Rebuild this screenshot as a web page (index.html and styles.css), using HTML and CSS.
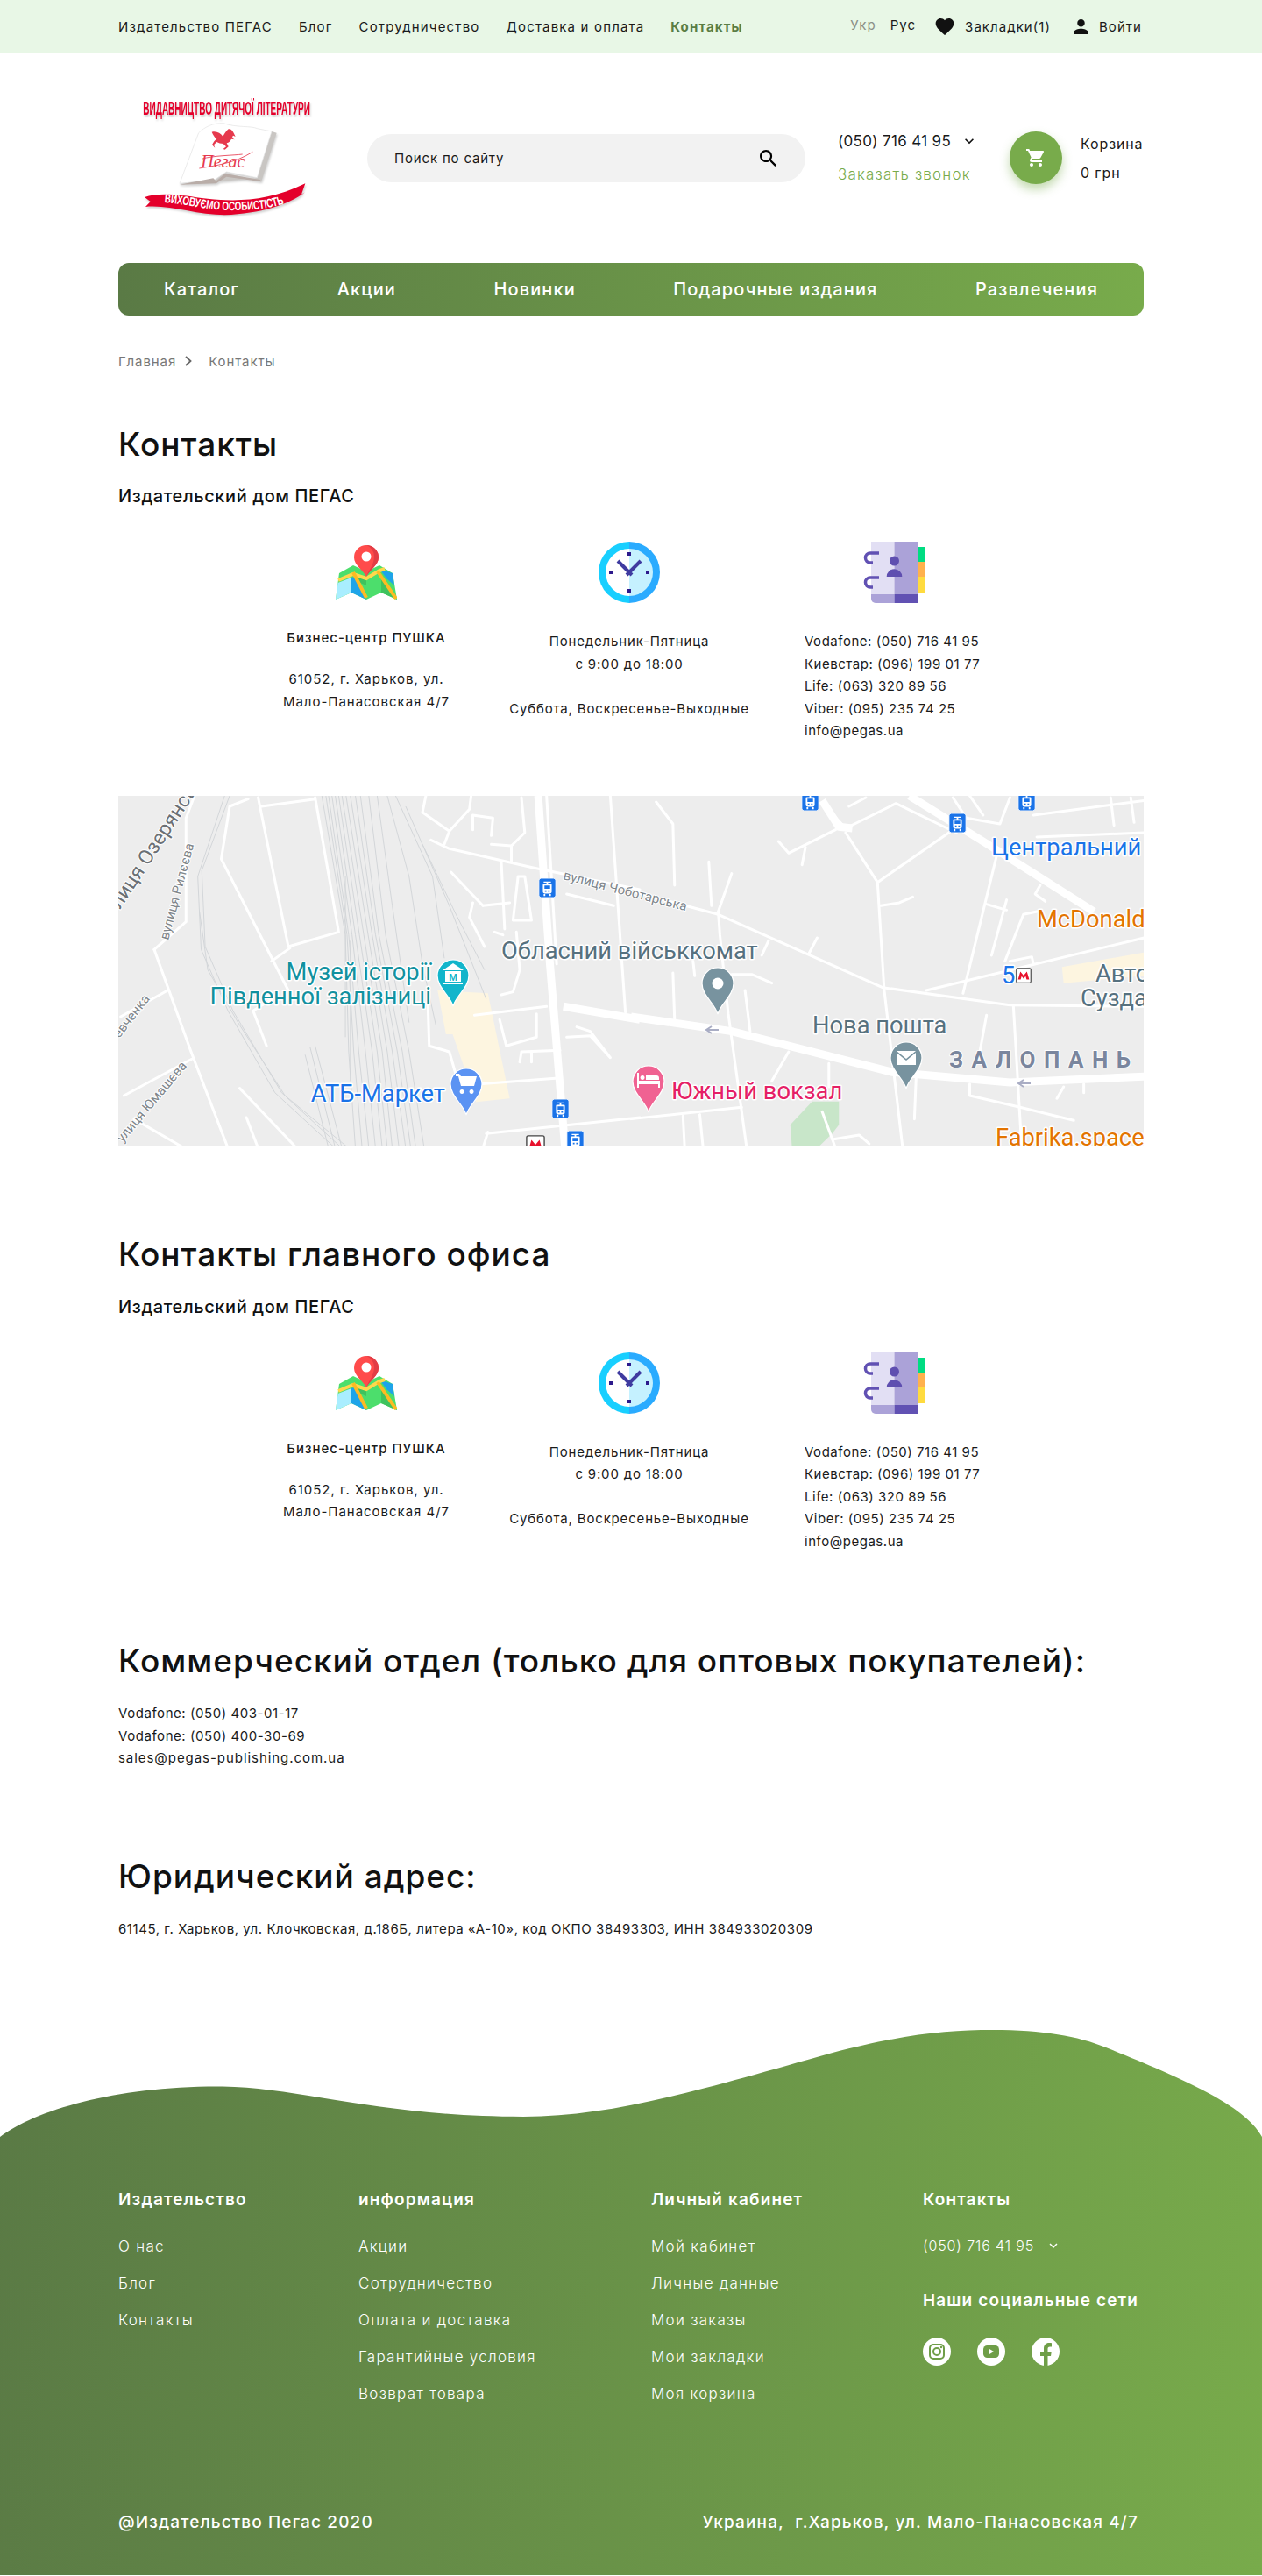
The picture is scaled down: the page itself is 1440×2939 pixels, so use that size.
FILE: index.html
```html
<!DOCTYPE html>
<html lang="ru">
<head>
<meta charset="utf-8">
<title>Контакты — Издательство ПЕГАС</title>
<link rel="stylesheet" href="styles.css">
</head>
<body>
<svg class="defs" width="0" height="0" aria-hidden="true">
  <defs>
    <symbol id="i-map" viewBox="0 0 70 70">
      <path fill="#4cde6c" d="M4 36 20 27 35 34 50 27 65 36 70 66 52 58 35 66 18 58 0 66Z"/>
      <path fill="#a9eeff" d="M2.500 47 18 41 18 58 0 66Z"/>
      <path fill="#1ea4e9" d="M18 41 22 40 35 66 18 58Z"/>
      <path fill="#1ea4e9" d="M50 31 65 36 67 50 58 42Z"/>
      <path fill="#3fc25e" d="M52 40 70 66 52 58Z"/>
      <path fill="#3fc25e" d="M22 38 35 42 35 50 28 47Z"/>
      <path fill="none" stroke="#ffd84d" stroke-width="4" d="M3 44 20 37 35 42 50 33 56 31"/>
      <path fill="none" stroke="#fdbb23" stroke-width="4" d="M20 35 35 64M48 34 69 65"/>
      <path fill="#ff4b4b" d="M35 40C32 33 21 27 21 18A14 14 0 0 1 49 18C49 27 38 33 35 40Z"/>
      <path fill="#e23c45" d="M35 4A14 14 0 0 1 49 18C49 27 38 33 35 40C38 32 44 26 44 17A14 14 0 0 0 35 4Z"/>
      <circle cx="35" cy="17" r="5.500" fill="#fff"/>
    </symbol>
    <symbol id="i-clock" viewBox="0 0 70 70">
      <path fill="#18cfff" d="M35 0A35 35 0 0 0 35 70Z"/>
      <path fill="#2aabff" d="M35 0A35 35 0 0 1 35 70Z"/>
      <path fill="#fff" d="M35 8A27 27 0 0 0 35 62Z"/>
      <path fill="#c5f1ff" d="M35 8A27 27 0 0 1 35 62Z"/>
      <path fill="#2d1a8c" d="M33 12h4v4h-4zM33 54h4v4h-4zM12 33h4v4h-4zM54 33h4v4h-4z"/>
      <path fill="none" stroke="#3f3ba0" stroke-width="4" d="M22 22 38 38M48 22 32 38"/>
    </symbol>
    <symbol id="i-book" viewBox="0 0 70 70">
      <path fill="#00dc82" d="M62 6h8v17h-8z"/>
      <path fill="#ffb14d" d="M62 23h8v17h-8z"/>
      <path fill="#ffdb3f" d="M62 40h8v18h-8z"/>
      <path fill="#e2dff4" d="M9 0h26.500v60H9z"/>
      <path fill="#aba2d8" d="M35.500 0H62v60H35.500z"/>
      <path fill="#aba2d8" d="M9 60h26.500v10H14a5 5 0 0 1-5-5z"/>
      <path fill="#6151b3" d="M35.500 60H62v10H35.500z"/>
      <path fill="none" stroke="#6151b3" stroke-width="3.500" d="M18 13H8a5 5 0 0 0 0 11h3M18 41H8a5 5 0 0 0 0 11h3"/>
      <circle cx="35.500" cy="22" r="5.500" fill="#5f4fb0"/>
      <path fill="#5f4fb0" d="M26.700 40a8.800 8.800 0 0 1 17.600 0z"/>
    </symbol>
    <symbol id="i-cart" viewBox="0 0 24 24"><path d="M7 18c-1.100 0-1.990.9-1.990 2S5.900 22 7 22s2-.9 2-2-.9-2-2-2zM1 2v2h2l3.600 7.590-1.350 2.450c-.16.28-.25.61-.25.96 0 1.100.9 2 2 2h12v-2H7.420c-.14 0-.25-.11-.25-.25l.03-.12.9-1.630h7.450c.75 0 1.410-.41 1.750-1.030l3.580-6.490c.08-.14.12-.31.12-.48 0-.55-.45-1-1-1H5.210l-.94-2H1zm16 16c-1.100 0-1.990.9-1.990 2s.89 2 1.990 2 2-.9 2-2-.9-2-2-2z"/></symbol>
    <symbol id="i-chev" viewBox="0 0 24 24"><path d="M7.410 8.590 12 13.170l4.590-4.580L18 10l-6 6-6-6z"/></symbol>
    <symbol id="i-tram" viewBox="0 0 21 24">
      <rect width="21" height="24" rx="3" fill="#1a73e8" stroke="#fff" stroke-width="1"/>
      <path fill="#fff" d="M6 4h9v1.500h-3.500V7H15a1 1 0 0 1 1 1v9a2 2 0 0 1-2 2H7a2 2 0 0 1-2-2V8a1 1 0 0 1 1-1h3.500V5.500H6z"/>
      <path fill="#1a73e8" d="M7 9h7v4H7zM7.500 15h2v2h-2zM11.500 15h2v2h-2z"/>
      <path fill="#fff" d="M6 19.500h2V22H6zM13 19.500h2V22h-2z"/>
    </symbol>
    <symbol id="i-metro" viewBox="0 0 24 24">
      <rect x="1" y="1" width="22" height="22" rx="2" fill="#fff" stroke="#444" stroke-width="1.500"/>
      <path fill="#e8112d" d="M3.500 18 7 6l5 6 5-6 3.500 12h-4l-1.500-5-3 4-3-4-1.500 5z"/>
    </symbol>
  </defs>
</svg>

<header class="topbar">
  <div class="wrap topbar-row">
    <nav class="top-links">
      <a>Издательство ПЕГАС</a><a>Блог</a><a>Сотрудничество</a><a>Доставка и оплата</a><a class="is-active">Контакты</a>
    </nav>
    <div class="top-tools">
      <span class="lang lang-off">Укр</span>
      <span class="lang">Рус</span>
      <span class="tool tool-heart">
        <svg class="ico-heart" viewBox="2 3 20 18.350"><path d="M12 21.350l-1.450-1.320C5.400 15.360 2 12.280 2 8.500 2 5.420 4.420 3 7.500 3c1.740 0 3.410.81 4.500 2.090C13.090 3.810 14.760 3 16.500 3 19.580 3 22 5.420 22 8.500c0 3.780-3.400 6.860-8.550 11.540L12 21.350z"/></svg>
        Закладки(1)
      </span>
      <span class="tool">
        <svg class="ico-user" viewBox="4 4 16 16"><path d="M12 12c2.210 0 4-1.790 4-4s-1.790-4-4-4-4 1.790-4 4 1.790 4 4 4zm0 2c-2.670 0-8 1.340-8 4v2h16v-2c0-2.660-5.330-4-8-4z"/></svg>
        Войти
      </span>
    </div>
  </div>
</header>

<div class="wrap head-row">
  <svg class="logo" viewBox="15 0 690 540" role="img" aria-label="Издательство Пегас">
    <g class="logo-shadow">
      <text class="logo-top" transform="scale(.4 1)" x="250" y="124" textLength="1430" lengthAdjust="spacingAndGlyphs">ВИДАВНИЦТВО  ДИТЯЧОЇ  ЛІТЕРАТУРИ</text>
    </g>
    <g class="logo-shadow">
      <path fill="#c9c6c3" d="M225 362 350 345 378 322 505 350 557 185 540 180 490 340Z"/>
      <path fill="#fff" stroke="#e3e3e3" stroke-width="2" d="M225 358 290 185C310 165 340 150 375 152 420 168 470 160 490 170L540 180 490 338 385 318 345 345Z"/>
      <path fill="#b9ada8" d="M225 362 340 340 350 350 380 325 500 345 505 352 385 335 350 358Z"/>
    </g>
    <path fill="#e6394d" d="M335 182C350 178 365 185 373 197 378 190 384 178 392 172 402 170 408 180 416 198L408 194C404 200 404 204 414 208L402 206C398 214 394 218 386 220L392 232 380 242 374 240 384 232 374 222C366 222 358 220 352 216L342 226 346 236 336 226C340 218 344 210 352 206 344 200 340 192 335 182Z"/>
    <text class="logo-script" x="298" y="304" textLength="150" lengthAdjust="spacingAndGlyphs">Пегас</text>
    <path fill="none" stroke="#e6394d" stroke-width="2.500" d="M292 306C350 296 410 290 475 250M300 274C340 262 410 262 440 258"/>
    <g class="logo-shadow">
      <path fill="#e4002b" d="M105 405C150 388 220 395 300 408 400 420 520 425 655 358L642 395 655 388C600 430 500 462 380 466 280 466 190 430 108 438L125 420Z"/>
    </g>
    <defs><path id="banner-line" d="M172 423C260 430 320 450 400 450 470 450 530 445 590 425"/></defs>
    <text class="logo-banner"><textPath href="#banner-line" textLength="415" lengthAdjust="spacingAndGlyphs">ВИХОВУЄМО ОСОБИСТІСТЬ</textPath></text>
  </svg>

  <form class="search">
    <span class="search-text">Поиск по сайту</span>
    <svg class="ico-search" viewBox="3 3 17.500 17.500"><path d="M15.500 14h-.79l-.28-.27C15.410 12.590 16 11.110 16 9.500 16 5.910 13.090 3 9.500 3S3 5.910 3 9.500 5.910 16 9.500 16c1.610 0 3.090-.59 4.230-1.570l.27.28v.79l5 4.990L20.490 19l-4.990-5zm-6 0C7.010 14 5 11.990 5 9.500S7.010 5 9.500 5 14 7.010 14 9.500 11.990 14 9.500 14z"/></svg>
  </form>

  <div class="phone-box">
    <div class="phone"><span>(050) 716 41 95</span><svg class="chev"><use href="#i-chev"/></svg></div>
    <a class="callback">Заказать звонок</a>
  </div>

  <div class="cart-box">
    <span class="cart-btn"><svg class="ico-cart"><use href="#i-cart"/></svg></span>
    <div class="cart-text"><span>Корзина</span><span>0 грн</span></div>
  </div>
</div>

<div class="wrap">
  <nav class="mainnav">
    <a>Каталог</a><a>Акции</a><a>Новинки</a><a>Подарочные издания</a><a>Развлечения</a>
  </nav>

  <div class="crumbs">
    <span>Главная</span>
    <svg class="crumb-sep" viewBox="0 0 8 12"><path d="M1 1 6.500 6 1 11"/></svg>
    <span>Контакты</span>
  </div>

  <h1 class="title title-first">Контакты</h1>
  <p class="sub">Издательский дом ПЕГАС</p>
  <section class="info">
    <div class="info-col">
      <svg class="info-ico"><use href="#i-map"/></svg>
      <p class="info-name">Бизнес-центр ПУШКА</p>
      <p class="info-text info-addr">61052, г. Харьков, ул.<br>Мало-Панасовская 4/7</p>
    </div>
    <div class="info-col">
      <svg class="info-ico"><use href="#i-clock"/></svg>
      <p class="info-text info-hours">Понедельник-Пятница<br>с 9:00 до 18:00<br><br>Суббота, Воскресенье-Выходные</p>
    </div>
    <div class="info-col info-col-left">
      <svg class="info-ico"><use href="#i-book"/></svg>
      <p class="info-text">Vodafone: (050) 716 41 95<br>Киевстар: (096) 199 01 77<br>Life: (063) 320 89 56<br>Viber: (095) 235 74 25<br>info@pegas.ua</p>
    </div>
  </section>

  <svg class="map" viewBox="0 0 1170 399" role="img" aria-label="Карта">
    <rect width="1170" height="399" fill="#ededed"/>
    <!-- left half, traced in crop coordinates -->
    <g transform="translate(-5 -8) scale(.3827 .3333)">
      <path class="area-y" d="M965 690 1115 700 1180 1060 1080 1072 1010 840 990 840Z"/>
      <g class="rail">
        <path d="M330 24 250 300 260 550 340 760 480 1040 660 1230"/>
        <path d="M345 24 262 280 272 540 355 760 500 1040 680 1230"/>
        <path d="M255 420 280 620 370 800 510 1050 700 1230"/>
        <path d="M620 24 690 500 700 900 720 1230"/>
        <path d="M632 24 695 500 715 900 740 1230"/>
        <path d="M640 24 700 500 730 900 760 1230"/>
        <path d="M650 24 710 500 750 900 780 1230"/>
        <path d="M660 24 720 500 770 900 800 1230"/>
        <path d="M670 24 732 500 785 900 815 1230"/>
        <path d="M680 24 745 500 800 900 830 1230"/>
        <path d="M692 24 758 500 815 900 850 1230"/>
        <path d="M705 24 770 500 830 900 870 1230"/>
        <path d="M720 24 780 500 845 900 885 1230"/>
        <path d="M735 24 790 500 860 900 900 1230"/>
        <path d="M760 24 810 500 880 900 925 1230"/>
        <path d="M785 24 830 400 880 800"/>
        <path d="M815 24 880 300 920 600 960 810"/>
        <path d="M840 24 950 300 985 580"/>
        <path d="M870 60 1000 400 1110 720"/>
        <path d="M920 190 1020 430 1105 620"/>
        <path d="M570 910 640 1230M585 885 660 1230M600 880 680 1230"/>
        <path d="M690 300 690 850M705 520 705 1000"/>
      </g>
      <g class="road">
        <path d="M945 175 1000 205 1250 270 1568 345"/>
        <path d="M120 550 230 900 340 1230"/>
        <path d="M120 550 215 455 215 100 240 24"/>
        <path d="M60 1130 210 1230M232 925 30 1050M160 690 20 780"/>
        <path d="M400 35 345 60 320 240 520 690M440 60 600 35M430 30 520 540 670 490 600 30M470 590 525 545"/>
        <path d="M415 760 455 880M415 760 470 720"/>
        <path d="M375 1025 545 1230M395 1125 430 1230"/>
        <path d="M930 24 920 80 1000 145 1060 70 1065 24M985 190 1000 145"/>
        <path d="M1125 160 1130 100 1070 90 1070 140M1125 190 1185 195 1225 150 1215 30M1185 195 1185 250"/>
        <path d="M1155 250 1165 480M1100 400 1180 390M1070 390 1060 440 1105 540M1005 285 1100 400M1205 300 1190 450 1245 450 1225 300Z"/>
        <path d="M1135 490 1160 500M1200 490 1210 620 1190 695 1155 705"/>
        <path d="M1075 775 1290 745M1150 790 1170 880 1260 850 1260 770M1210 935 1215 900 1330 895M1245 900 1245 935"/>
        <path d="M1090 1010 1325 990M1110 1180 1568 1125M1100 1230 1115 1175"/>
        <path d="M1350 360 1490 400M1480 24 1525 765M1350 850 1420 845 1480 920 1420 830 1380 815"/>
        <path d="M935 700 940 880 1000 900 1025 1000"/>
      </g>
      <path class="road-wide" d="M1265 24 1300 600 1345 1230"/>
      <path class="road" d="M1290 24 1320 600"/>
      <path class="road-wide" d="M1340 745 1568 790"/>
    </g>
    <!-- right half, traced in crop coordinates -->
    <g transform="translate(585 -8) scale(.3827 .3333)">
      <path class="area-g" d="M475 1150 540 1070 620 1070 620 1150 600 1180 555 1230 480 1230Z"/>
      <path class="area-y" d="M1285 610 1480 570 1530 560 1530 640 1290 665Z"/>
      <g class="road">
        <path d="M75 45 125 120 130 330M232 250 240 400M300 290 260 420 265 500 290 770 345 1230"/>
        <path d="M0 350 260 430 750 680 1130 740 1530 745"/>
        <path d="M580 60 640 135 790 50 970 150"/>
        <path d="M640 150 735 320 960 140M735 320 755 690 810 1230"/>
        <path d="M1090 230 990 700M880 690 1530 510M1140 740 1165 1230M1115 590 1170 430 1210 420"/>
        <path d="M440 180 470 220 610 140M520 200 510 260M1120 380 1075 570M1060 395 1120 415"/>
        <path d="M745 400 800 390 840 370M300 635 360 635 420 665M340 690 355 830M410 520 390 570M555 510 530 565M125 630 130 790M185 590 190 640"/>
        <path d="M0 1130 330 1090M155 1120 160 1230M205 1115 215 1230M470 900 420 1000M590 940 590 1020M1010 1010 1010 1050 1160 1090 1320 1135"/>
        <path d="M570 1105 610 1230M600 1200 680 1185 710 1215M850 990 845 1130M1060 775 1040 900M1290 1020 1270 1060M1350 1010 1350 1040"/>
        <path d="M1200 90 1530 40M1210 165 1530 150M1430 30 1440 125M1490 30 1500 115M1220 330 1205 360 1235 385"/>
        <path d="M650 60 700 30M960 30 1000 100 1100 120 1130 30M1010 24 1050 90"/>
        <path d="M1130 590 1195 575 1200 600"/>
      </g>
      <path class="road-wide" d="M0 780 300 830 780 970 1130 1005 1530 985"/>
      <path class="road-wide" d="M830 24 1050 180 1380 420"/>
      <path class="road-wide" d="M570 40 620 130 660 135"/>
    </g>
    <g class="arrows">
      <path d="M677 263l-6 4 6 4M671 267h14"/>
      <path d="M1033 324l-6 4 6 4M1027 328h14"/>
    </g>
    <!-- street names -->
    <text class="lb-street lb-big" transform="translate(2 130) rotate(-57)">лиця Озерянська</text>
    <text class="lb-street" transform="translate(57 165) rotate(-75)">вулиця Рилєєва</text>
    <text class="lb-street" transform="translate(1 277) rotate(-52)">евченка</text>
    <text class="lb-street" transform="translate(5 396) rotate(-50)">улиця Юмашева</text>
    <text class="lb-street" transform="translate(507 95) rotate(14.500)">вулиця Чоботарська</text>
    <!-- place names -->
    <text class="lb lb-teal lb-end" x="357" y="210">Музей історії</text>
    <text class="lb lb-teal lb-end" x="357" y="238">Південної залізниці</text>
    <text class="lb lb-blue lb-end" x="373" y="349">АТБ-Маркет</text>
    <text class="lb lb-slate" x="437" y="186">Обласний військкомат</text>
    <text class="lb lb-slate" x="792" y="271">Нова пошта</text>
    <text class="lb lb-pink" x="631" y="346">Южный вокзал</text>
    <text class="lb lb-blue" x="996" y="68">Центральний</text>
    <text class="lb lb-orange" x="1048" y="150">McDonald's</text>
    <text class="lb lb-slate" x="1115" y="212">Авто</text>
    <text class="lb lb-slate" x="1098" y="240">Суздаль</text>
    <text class="lb lb-orange" x="1001" y="399">Fabrika.space</text>
    <text class="lb lb-blue" x="1008" y="214">5</text>
    <text class="lb-district" x="948" y="310">ЗАЛОПАНЬ</text>
    <!-- markers -->
    <use href="#i-tram" x="479" y="94" width="21" height="22"/>
    <use href="#i-tram" x="494" y="346" width="21" height="22"/>
    <use href="#i-tram" x="511" y="382" width="21" height="22"/>
    <use href="#i-tram" x="779" y="-5" width="21" height="22"/>
    <use href="#i-tram" x="947" y="20" width="21" height="22"/>
    <use href="#i-tram" x="1026" y="-5" width="21" height="22"/>
    <use href="#i-metro" x="465" y="387" width="22" height="22"/>
    <use href="#i-metro" x="1024" y="195" width="18" height="20"/>
    <g class="pin pin-teal" transform="translate(382 240)">
      <path d="M0 0C-3-12-18-21-18-35A18 18 0 1 1 18-35C18-21 3-12 0 0Z"/>
      <path class="pin-glyph" d="M-11-25h22v-2H-11zM-9-28h18v-12H-9zM-12-41 0-49 12-41Z"/>
      <text class="pin-m" x="0" y="-29">М</text>
    </g>
    <g class="pin pin-blue" transform="translate(397 364)">
      <path d="M0 0C-3-12-18-21-18-35A18 18 0 1 1 18-35C18-21 3-12 0 0Z"/>
      <path class="pin-glyph" d="M-12-47h4l2 3H12L9-33H-6L-9-44h-3ZM-5-29a2.500 2.500 0 1 0 .1 0ZM6-29a2.500 2.500 0 1 0 .1 0Z"/>
    </g>
    <g class="pin pin-slate" transform="translate(684 249)">
      <path d="M0 0C-3-12-18-21-18-35A18 18 0 1 1 18-35C18-21 3-12 0 0Z"/>
      <circle class="pin-glyph" cx="0" cy="-35" r="6.500"/>
    </g>
    <g class="pin pin-slate" transform="translate(899 334)">
      <path d="M0 0C-3-12-18-21-18-35A18 18 0 1 1 18-35C18-21 3-12 0 0Z"/>
      <path class="pin-glyph" d="M-11-43H11L0-34ZM-11-41-2.500-34 0-32 2.500-34 11-41V-27H-11Z"/>
    </g>
    <g class="pin pin-pink" transform="translate(605 361)">
      <path d="M0 0C-3-12-18-21-18-35A18 18 0 1 1 18-35C18-21 3-12 0 0Z"/>
      <path class="pin-glyph" d="M-13-45h2v9H13v8h-2v-4H-11v4h-2ZM-7-42a2.500 2.500 0 1 0 .1 0ZM-3-42H9a3 3 0 0 1 3 3v2H-3Z"/>
    </g>
  </svg>

  <h2 class="title title-office">Контакты главного офиса</h2>
  <p class="sub">Издательский дом ПЕГАС</p>
  <section class="info">
    <div class="info-col">
      <svg class="info-ico"><use href="#i-map"/></svg>
      <p class="info-name">Бизнес-центр ПУШКА</p>
      <p class="info-text info-addr">61052, г. Харьков, ул.<br>Мало-Панасовская 4/7</p>
    </div>
    <div class="info-col">
      <svg class="info-ico"><use href="#i-clock"/></svg>
      <p class="info-text info-hours">Понедельник-Пятница<br>с 9:00 до 18:00<br><br>Суббота, Воскресенье-Выходные</p>
    </div>
    <div class="info-col info-col-left">
      <svg class="info-ico"><use href="#i-book"/></svg>
      <p class="info-text">Vodafone: (050) 716 41 95<br>Киевстар: (096) 199 01 77<br>Life: (063) 320 89 56<br>Viber: (095) 235 74 25<br>info@pegas.ua</p>
    </div>
  </section>

  <h2 class="title title-sales">Коммерческий отдел (только для оптовых покупателей):</h2>
  <p class="plain">Vodafone: (050) 403-01-17<br>Vodafone: (050) 400-30-69<br><span class="plain-mail">sales@pegas-publishing.com.ua</span></p>

  <h2 class="title title-legal">Юридический адрес:</h2>
  <p class="plain">61145, г. Харьков, ул. Клочковская, д.186Б, литера «А-10», код ОКПО 38493303, ИНН 384933020309</p>
</div>

<footer class="footer">
  <div class="wrap">
    <div class="foot-cols">
      <div>
        <h3 class="foot-h">Издательство</h3>
        <ul class="foot-list"><li>О нас</li><li>Блог</li><li>Контакты</li></ul>
      </div>
      <div>
        <h3 class="foot-h">информация</h3>
        <ul class="foot-list"><li>Акции</li><li>Сотрудничество</li><li>Оплата и доставка</li><li>Гарантийные условия</li><li>Возврат товара</li></ul>
      </div>
      <div>
        <h3 class="foot-h">Личный кабинет</h3>
        <ul class="foot-list"><li>Мой кабинет</li><li>Личные данные</li><li>Мои заказы</li><li>Мои закладки</li><li>Моя корзина</li></ul>
      </div>
      <div>
        <h3 class="foot-h">Контакты</h3>
        <div class="foot-phone"><span>(050) 716 41 95</span><svg class="chev chev-foot"><use href="#i-chev"/></svg></div>
        <h3 class="foot-h foot-h-social">Наши социальные сети</h3>
        <div class="socials">
          <svg class="social" viewBox="0 0 32 32" role="img" aria-label="Instagram">
            <circle cx="16" cy="16" r="16" fill="#fff"/>
            <rect x="8" y="8" width="16" height="16" rx="4" class="soc-line"/>
            <circle cx="16" cy="16" r="4" class="soc-line"/>
            <circle cx="21" cy="11" r="1.200" class="soc-fill"/>
          </svg>
          <svg class="social" viewBox="0 0 32 32" role="img" aria-label="YouTube">
            <circle cx="16" cy="16" r="16" fill="#fff"/>
            <rect x="7" y="9" width="18" height="14" rx="4.500" class="soc-fill"/>
            <path fill="#fff" d="M14 13v6l5-3z"/>
          </svg>
          <svg class="social" viewBox="0 0 32 32" role="img" aria-label="Facebook">
            <circle cx="16" cy="16" r="16" fill="#fff"/>
            <path class="soc-fill" d="M14 32V21h-4v-5h4v-3.500C14 8.500 16.500 6 20 6c1.500 0 3 .2 3 .2v4.300h-2c-2 0-2.500 1.200-2.500 2.500V16h4.300l-.8 5h-3.500v11z"/>
          </svg>
        </div>
      </div>
    </div>
    <div class="foot-bottom">
      <span>@Издательство Пегас 2020</span>
      <span>Украина,&nbsp; г.Харьков, ул. Мало-Панасовская 4/7</span>
    </div>
  </div>
</footer>
</body>
</html>
```

FILE: styles.css
```css
* { box-sizing: border-box; }
html, body { margin: 0; padding: 0; }
body {
  font-family: Inter, "Noto Sans", "Liberation Sans", sans-serif;
  font-size: 15px;
  color: #1a1a1a;
  background: #fff;
  letter-spacing: .07em;
}
p, h1, h2, h3, ul { margin: 0; padding: 0; }
ul { list-style: none; }
.defs { position: absolute; }
.wrap { width: 1170px; margin: 0 auto; }

/* top bar */
.topbar { height: 60px; background: #e8f7e6; }
.topbar-row { display: flex; align-items: center; justify-content: space-between; height: 60px; padding-right: 2px; }
.top-links { display: flex; gap: 30px; letter-spacing: .078em; }
.top-links a { color: #1a1a1a; }
.top-links .is-active { color: #5a7d45; font-weight: 700; letter-spacing: .075em; }
.top-tools { display: flex; align-items: center; }
.lang { margin-right: 16px; position: relative; top: -2px; }
.lang-off { color: #8a8f88; }
.tool { display: inline-flex; align-items: center; gap: 12px; }
.tool-heart { margin: 0 26px 0 6px; }
.ico-heart { width: 22px; height: 19px; fill: #111; }
.ico-user { width: 17px; height: 17px; fill: #111; }

/* header */
.head-row { display: flex; align-items: center; height: 240px; }
.logo { width: 230px; height: 180px; flex: none; margin-right: 54px; }
.logo-shadow { filter: drop-shadow(3px 6px 3px rgba(0,0,0,.18)); }
.logo-top { font: 700 68px "Liberation Sans", sans-serif; fill: #e4002b; letter-spacing: 0; }
.logo-script { font: italic 400 64px "Liberation Serif", serif; fill: #e6394d; letter-spacing: 0; }
.logo-banner { font: 700 42px "Liberation Sans", sans-serif; fill: #fff; letter-spacing: 0; }
.search {
  display: flex; align-items: center; justify-content: space-between;
  width: 500px; height: 55px; padding: 0 33px 0 31px;
  border-radius: 28px; background: #f2f2f2; flex: none; margin-right: 37px;
}
.search-text { color: #1a1a1a; letter-spacing: .055em; }
.ico-search { width: 19px; height: 19px; }
.phone-box { width: 196px; flex: none; }
.phone { display: flex; align-items: center; gap: 11px; font-size: 17px; height: 24px; letter-spacing: .02em; }
.chev { width: 20px; height: 20px; fill: #111; }
.callback { display: block; margin-top: 14px; font-size: 17px; font-weight: 300; color: #78ab4b; text-decoration: underline; line-height: 24px; letter-spacing: .07em; }
.cart-box { display: flex; align-items: center; gap: 21px; }
.cart-btn {
  width: 60px; height: 60px; border-radius: 50%; background: #78ab4b;
  display: flex; align-items: center; justify-content: center;
  box-shadow: 0 6px 12px rgba(120,171,75,.45);
}
.ico-cart { width: 24px; height: 24px; fill: #fff; }
.cart-text { display: flex; flex-direction: column; gap: 13px; line-height: 20px; font-size: 16px; letter-spacing: .055em; }

/* main nav */
.mainnav {
  display: flex; align-items: center; justify-content: space-between;
  height: 60px; padding: 0 52px; border-radius: 12px;
  background: linear-gradient(90deg, #5a7a45, #78ab4b);
  color: #fff; font-size: 20px; font-weight: 500; letter-spacing: .055em;
}

/* breadcrumbs */
.crumbs { display: flex; align-items: center; margin-top: 42px; height: 20px; color: #777; letter-spacing: .06em; }
.crumb-sep { width: 8px; height: 12px; margin: 0 19px 0 10px; fill: none; stroke: #666; stroke-width: 1.800; }

/* headings */
.title { font-size: 37px; font-weight: 500; line-height: 44px; letter-spacing: .027em; color: #111; }
.title-first { margin-top: 63px; }
.title-office { margin-top: 102px; }
.title-sales { margin-top: 102px; }
.title-legal { margin-top: 100px; }
.sub { margin-top: 26px; font-size: 20px; font-weight: 500; line-height: 22px; letter-spacing: .03em; color: #111; }
.title-office + .sub { margin-top: 27px; }

/* contact columns */
.info { display: grid; grid-template-columns: 300px 300px 304px; margin: 41px 0 0 133px; }
.info-col { display: flex; flex-direction: column; align-items: center; text-align: center; }
.info-col-left { text-align: left; }
.info-col-left .info-text { width: 204px; letter-spacing: .035em; white-space: nowrap; }
.info-ico { width: 70px; height: 70px; display: block; }
.info-name { margin-top: 27px; line-height: 26px; font-weight: 500; letter-spacing: .065em; }
.info-text { margin-top: 31px; line-height: 25.500px; font-weight: 400; letter-spacing: .065em; white-space: nowrap; }
.info-hours { letter-spacing: .055em; }
.info-addr { margin-top: 21px; }

/* map */
.map { display: block; width: 1170px; height: 399px; margin-top: 61px; overflow: hidden; }
.road, .road path { fill: none; stroke: #fff; stroke-width: 3px; vector-effect: non-scaling-stroke; stroke-linejoin: round; stroke-linecap: round; }
.road-wide { fill: none; stroke: #fff; stroke-width: 9px; vector-effect: non-scaling-stroke; stroke-linejoin: round; }
.rail path { fill: none; stroke: #d3d6d9; stroke-width: 1px; vector-effect: non-scaling-stroke; }
.area-y { fill: #fdf5e0; }
.area-g { fill: #c8e6c9; }
.arrows path { fill: none; stroke: #a9adc4; stroke-width: 2px; }
.lb, .lb-street, .lb-district {
  font-family: Roboto, "Noto Sans", sans-serif;
  paint-order: stroke; stroke: #fff; stroke-linejoin: round; letter-spacing: 0;
}
.lb { font-size: 27.300px; stroke-width: 3px; }
.lb-end { text-anchor: end; }
.lb-teal { fill: #12919f; }
.lb-blue { fill: #1a73e8; }
.lb-slate { fill: #56717f; }
.lb-pink { fill: #e52066; }
.lb-orange { fill: #e37400; }
.lb-street { font-size: 15px; fill: #80868b; stroke-width: 2px; }
.lb-big { font-size: 23px; fill: #6b7075; }
.lb-district { font-size: 26px; font-weight: 700; fill: #7a869e; letter-spacing: 9.500px; stroke-width: 2px; }
.pin > path:first-child { stroke: #fff; stroke-width: 1.200px; }
.pin-teal > path:first-child { fill: #12b5cb; }
.pin-blue > path:first-child { fill: #5b93f3; }
.pin-slate > path:first-child { fill: #78939f; }
.pin-pink > path:first-child { fill: #f06292; }
.pin-glyph { fill: #fff; }
.pin-m { font: 700 11px Roboto, sans-serif; fill: #12b5cb; text-anchor: middle; letter-spacing: 0; }

/* plain copy */
.plain { margin-top: 25px; line-height: 25.500px; letter-spacing: .037em; }
.plain-mail { letter-spacing: .063em; }

/* footer */
.footer {
  margin-top: 103px; height: 622px; padding-top: 182px; color: #fff;
  background: linear-gradient(95deg, #5a7a45 0%, #78ab4b 100%);
  clip-path: path("M0 122C40 92 130 64.500 248 64.500C340 64.500 430 99 597 99C700 99 800 68 950 26C1030 5 1080 0 1133 0C1190 0 1230 7 1262 20C1340 52 1420 84 1440 122V622H0Z");
}
.foot-cols { display: grid; grid-template-columns: 274px 334px 310px 1fr; height: 368px; }
.foot-h { font-size: 19px; line-height: 24px; font-weight: 600; letter-spacing: .06em; white-space: nowrap; }
.foot-list { margin-top: 20px; line-height: 42.100px; font-size: 17px; font-weight: 300; letter-spacing: .075em; }
.foot-phone { display: flex; align-items: center; gap: 13px; margin-top: 29px; height: 22px; font-size: 16px; font-weight: 300; letter-spacing: .055em; }
.chev-foot { width: 18px; height: 18px; fill: #fff; }
.foot-h-social { margin-top: 40px; }
.socials { display: flex; gap: 30px; margin-top: 30px; }
.social { width: 32px; height: 32px; display: block; }
.soc-line { fill: none; stroke: #6f9e48; stroke-width: 2; }
.soc-fill { fill: #6f9e48; }
.foot-bottom {
  display: flex; justify-content: space-between; padding-right: 6px;
  font-size: 19px; font-weight: 500; line-height: 24px; letter-spacing: .06em;
}
```
